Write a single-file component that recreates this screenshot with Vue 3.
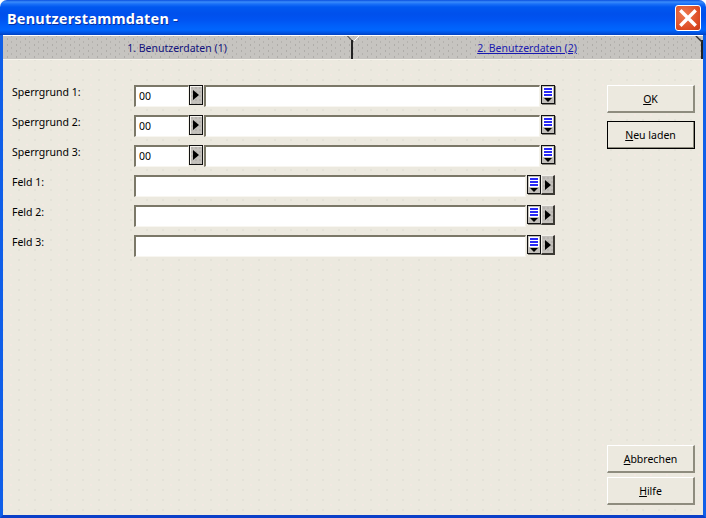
<template>
  <div class="window">
    <div class="titlebar">
      <span class="title">Benutzerstammdaten -</span>
      <button class="close" aria-label="Schließen">
        <svg width="18" height="18" viewBox="0 0 18 18">
          <path d="M2.5 2.5 L15.5 15.5 M15.5 2.5 L2.5 15.5" stroke="#fff" stroke-width="3.4" stroke-linecap="square" fill="none" />
        </svg>
      </button>
    </div>
    <div class="frame">
      <div class="tabs">
        <div class="tab active">1. Benutzerdaten (1)</div>
        <div class="tab link"><u>2. Benutzerdaten (2)</u></div>
        <svg class="notch mid" width="14" height="6" viewBox="0 0 14 6">
          <path d="M0.5 0 L6 5.5" stroke="#222" fill="none" />
          <path d="M12 0 L7 5" stroke="#fff" fill="none" />
        </svg>
        <svg class="notch end" width="8" height="7" viewBox="0 0 8 7">
          <path d="M1 0 L7 6" stroke="#333" stroke-width="1.4" fill="none" />
        </svg>
      </div>
      <div class="content">
        <div class="form">
          <div v-for="row in sperrRows" :key="row" class="row">
            <label class="label">{{ row }}</label>
            <div class="field code">00</div>
            <button class="arrow boxed"><i class="tri"></i></button>
            <div class="field grow long"></div>
            <button class="lookup">
              <span class="lines"></span>
              <i class="down"></i>
            </button>
          </div>
          <div v-for="row in feldRows" :key="row" class="row">
            <label class="label">{{ row }}</label>
            <div class="field grow wide"></div>
            <button class="lookup">
              <span class="lines"></span>
              <i class="down"></i>
            </button>
            <button class="arrow"><i class="tri"></i></button>
          </div>
        </div>
        <div class="actions">
          <button class="btn"><u>O</u>K</button>
          <button class="btn default"><u>N</u>eu laden</button>
          <div class="spacer"></div>
          <div class="bottom">
            <button class="btn"><u>A</u>bbrechen</button>
            <button class="btn"><u>H</u>ilfe</button>
          </div>
        </div>
      </div>
    </div>
  </div>
</template>

<script setup>
const sperrRows = ['Sperrgrund 1:', 'Sperrgrund 2:', 'Sperrgrund 3:']
const feldRows = ['Feld 1:', 'Feld 2:', 'Feld 3:']
</script>

<style>
html, body {
  margin: 0;
  background: #fff;
}
</style>

<style scoped>
.window {
  width: 706px;
  height: 518px;
  display: flex;
  flex-direction: column;
  font-family: "Noto Sans", "DejaVu Sans", sans-serif;
  font-size: 10.5px;
  color: #000;
  overflow: hidden;
  border-radius: 7px 7px 0 0;
}

.titlebar {
  height: 35px;
  flex: none;
  display: flex;
  align-items: center;
  justify-content: space-between;
  padding: 0 5px 0 7px;
  background: linear-gradient(#0a4fe0 0, #3a8cfa 2px, #1a70f8 4px, #0058f0 7px, #0050ec 14px, #0054f2 20px, #0060fa 26px, #0066fe 30px, #0052e0 33px, #0040c0 35px);
}

.title {
  color: #fff;
  font-family: "Noto Sans", sans-serif;
  font-weight: bold;
  font-size: 14.5px;
  letter-spacing: 0.2px;
  text-shadow: 1px 1px 0 #0a2fa0;
}

.close {
  width: 26px;
  height: 26px;
  padding: 0;
  display: flex;
  align-items: center;
  justify-content: center;
  border: 1px solid #fff;
  border-radius: 3px;
  background: radial-gradient(circle at 35% 35%, #ee7a50, #dc4a22 70%, #c43a18);
}

.frame {
  flex: 1;
  display: flex;
  flex-direction: column;
  min-height: 0;
  border-left: 3px solid #0f5fe8;
  border-right: 3px solid #0f5fe8;
  border-bottom: 3px solid #0a3fc8;
}

.tabs {
  position: relative;
  height: 25px;
  flex: none;
  display: flex;
  border-top: 1px solid #fff;
  border-bottom: 1px solid #f6f4ec;
  box-sizing: border-box;
  background-color: #c6c4c0;
  background-image:
    radial-gradient(circle, #aeaca8 0.6px, transparent 0.8px),
    radial-gradient(circle, #b4b2ae 0.6px, transparent 0.8px);
  background-size: 9px 6px;
  background-position: 0 0, 4px 3px;
}

.tab {
  flex: 1;
  display: flex;
  align-items: center;
  justify-content: center;
  font-size: 10.5px;
  color: #10107c;
}

.tab.active {
  flex: none;
  width: 350px;
  box-sizing: border-box;
  border-right: 2px solid #222;
  margin-top: 4px;
  padding-bottom: 4px;
}

.tab.link {
  color: #1a1ab0;
  border-right: 2px solid #222;
  margin-top: 4px;
  padding-bottom: 4px;
}

.notch {
  position: absolute;
  top: 0;
}

.notch.mid {
  left: 344px;
}

.notch.end {
  right: 0;
}

.content {
  flex: 1;
  display: flex;
  justify-content: space-between;
  padding: 25px 8px 10px 9px;
  min-height: 0;
  background-color: #ece9df;
  background-image:
    radial-gradient(circle, #f4e8e2 0.7px, transparent 0.9px),
    radial-gradient(circle, #e4e2d8 0.7px, transparent 0.9px);
  background-size: 16px 10px;
  background-position: 0 0, 8px 5px;
}

.form {
  display: flex;
  flex-direction: column;
  gap: 8px;
  width: 543px;
}

.row {
  height: 22px;
  display: flex;
  align-items: flex-start;
}

.label {
  width: 122px;
  flex: none;
  line-height: 14px;
}

.field {
  height: 22px;
  box-sizing: border-box;
  background: #fff;
  border-style: solid;
  border-width: 2px 1px 1px 2px;
  border-color: #7b7868 #f4f2ea #f8f6f0 #7b7868;
}

.field.code {
  width: 55px;
  flex: none;
  padding: 2px 0 0 3px;
  line-height: 15px;
  font-size: 10.5px;
}

.grow {
  flex: 1;
}

.long {
  margin-left: 1px;
  margin-right: 1px;
}

.wide {
  margin-right: 1px;
}

.arrow {
  width: 14px;
  height: 20px;
  flex: none;
  padding: 0;
  display: flex;
  align-items: center;
  justify-content: center;
  box-sizing: border-box;
  background-color: #c3c0bb;
  background-image: radial-gradient(circle, #a8a6a2 0.6px, transparent 0.8px);
  background-size: 4px 4px;
  border-style: solid;
  border-width: 1px 2px 2px 1px;
  border-color: #f4f2ec #3c3a34 #3c3a34 #f4f2ec;
}

.arrow.boxed {
  border: 1px solid #111;
  box-shadow: inset 1px 1px 0 #f4f2ec;
}

.tri {
  display: block;
  width: 0;
  height: 0;
  border-left: 6px solid #000;
  border-top: 5px solid transparent;
  border-bottom: 5px solid transparent;
}

.lookup {
  width: 14px;
  height: 19px;
  flex: none;
  padding: 1px 0 0;
  display: flex;
  flex-direction: column;
  align-items: center;
  box-sizing: border-box;
  background: #c3c0bb;
  border: 1px solid #111;
  box-shadow: 1px 1px 0 #8c8a80;
}

.lines {
  width: 10px;
  height: 10px;
  flex: none;
  box-sizing: border-box;
  background: linear-gradient(#2a2af5 0, #2a2af5 2px, #fff 2px, #fff 3px, #2a2af5 3px, #2a2af5 5px, #fff 5px, #fff 6px, #2a2af5 6px, #2a2af5 8px);
  border: 1px solid #fff;
}

.down {
  display: block;
  width: 0;
  height: 0;
  margin-top: 1px;
  border-top: 4px solid #000;
  border-left: 4px solid transparent;
  border-right: 4px solid transparent;
}

.actions {
  display: flex;
  flex-direction: column;
  width: 88px;
  gap: 8px;
}

.spacer {
  flex: 1;
}

.bottom {
  display: flex;
  flex-direction: column;
  gap: 4px;
}

.btn {
  height: 28px;
  flex: none;
  padding: 0;
  box-sizing: border-box;
  font: inherit;
  font-size: 10.5px;
  color: #000;
  background: #ece9df;
  border-style: solid;
  border-width: 1px 2px 2px 1px;
  border-color: #fff #8e8c7e #8e8c7e #fff;
}

.btn.default {
  outline: 1px solid #000;
  outline-offset: -1px;
}
</style>
